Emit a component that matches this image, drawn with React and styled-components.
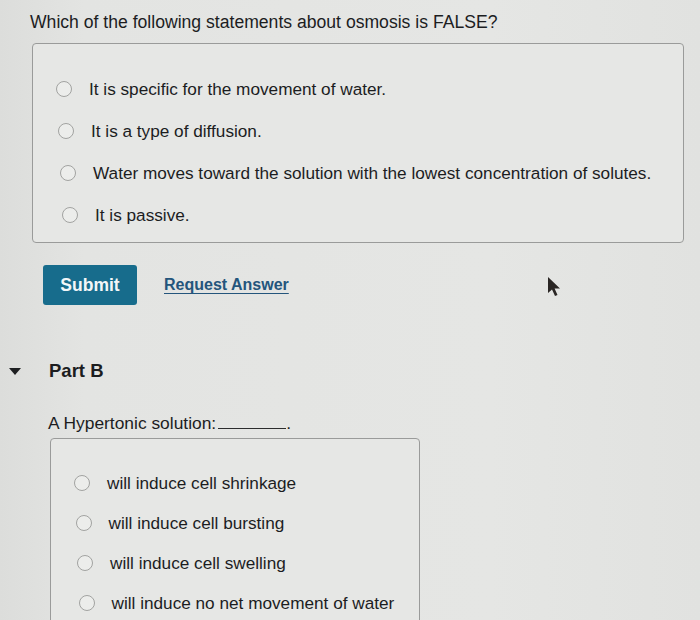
import React from 'react'
import styled, {createGlobalStyle} from 'styled-components'

const GlobalStyle = createGlobalStyle`
  body {
    margin: 0;
    background: #e2e3e1;
    font-family: "Liberation Sans", Arial, sans-serif;
    color: #1c1d1f;
  }
`

const partA = [
  'It is specific for the movement of water.',
  'It is a type of diffusion.',
  'Water moves toward the solution with the lowest concentration of solutes.',
  'It is passive.'
]

const partB = [
  'will induce cell shrinkage',
  'will induce cell bursting',
  'will induce cell swelling',
  'will induce no net movement of water'
]

function Choices({items, row, drift, ...rest}) {
  return (
    <ChoiceBox {...rest}>
      {items.map((text, i) => (
        <Option key={text} $row={row} $shift={i * drift}>
          <Radio />
          <span>{text}</span>
        </Option>
      ))}
    </ChoiceBox>
  )
}

const Pointer = () => (
  <Cursor width="16" height="22" viewBox="0 0 16 22">
    <path d="M2 1 L2 17 L6 13.5 L9 20 L11.5 19 L8.6 12.6 L14 12.4 Z" fill="#2a2624" />
  </Cursor>
)

export default function App() {
  return (
    <Page>
      <GlobalStyle />
      <Title>Which of the following statements about osmosis is FALSE?</Title>
      <Choices items={partA} row={42} drift={2} $left={32} $width={652} $height={200} $top={10} />

      <Actions>
        <Button type="button">Submit</Button>
        <LinkText href="#">Request Answer</LinkText>
      </Actions>

      <PartHeader>
        <Caret />
        <PartTitle>Part B</PartTitle>
      </PartHeader>

      <Prompt>
        A Hypertonic solution:<Blank />.
      </Prompt>
      <Choices items={partB} row={40} drift={1.5} $left={50} $width={370} $height={220} $top={5} />

      <Pointer />
    </Page>
  )
}

const Page = styled.div`
  position: relative;
  width: 700px;
  height: 620px;
  overflow: hidden;
  background: linear-gradient(90deg, #dcdddb 0%, #e3e4e2 12%, #e5e6e4 70%, #e1e2e0 100%);
`

const Title = styled.h1`
  margin: 0;
  padding: 12px 0 0 30px;
  font-size: 17.6px;
  line-height: 21px;
  font-weight: normal;
`

const ChoiceBox = styled.div`
  box-sizing: border-box;
  margin: ${p => p.$top}px 0 0 ${p => p.$left}px;
  width: ${p => p.$width}px;
  height: ${p => p.$height}px;
  padding: 24px 0 0 23px;
  border: 1px solid #9a9b9a;
  border-radius: 4px;
  background: #e6e7e5;
`

const Option = styled.div`
  display: flex;
  align-items: center;
  gap: 17px;
  height: ${p => p.$row}px;
  padding-left: ${p => p.$shift}px;
  font-size: 17.2px;
`

const Radio = styled.span`
  flex: none;
  box-sizing: border-box;
  width: 16px;
  height: 16px;
  border: 1.5px solid #a2a3a1;
  border-radius: 50%;
  background: #ecedeb;
`

const Actions = styled.div`
  display: flex;
  align-items: center;
  gap: 27px;
  margin: 22px 0 0 43px;
`

const Button = styled.button`
  width: 94px;
  height: 40px;
  border: none;
  border-radius: 3px;
  background: #176c8c;
  color: #f2f6f8;
  font-family: inherit;
  font-size: 17.5px;
  font-weight: bold;
`

const LinkText = styled.a`
  color: #24557c;
  font-size: 16px;
  font-weight: bold;
  text-decoration: underline;
  text-underline-offset: 3px;
`

const PartHeader = styled.div`
  display: flex;
  align-items: center;
  height: 24px;
  margin-top: 54px;
  padding-left: 9px;
`

const Caret = styled.span`
  width: 0;
  height: 0;
  border-left: 6px solid transparent;
  border-right: 6px solid transparent;
  border-top: 7px solid #1e1f21;
  margin-right: 28px;
`

const PartTitle = styled.h2`
  margin: 0;
  font-size: 18.5px;
  font-weight: bold;
`

const Prompt = styled.p`
  margin: 30px 0 0 48px;
  font-size: 17.4px;
  line-height: 20px;
`

const Blank = styled.span`
  display: inline-block;
  width: 68px;
  margin-left: 2px;
  border-bottom: 1px solid #2b2c2d;
`

const Cursor = styled.svg`
  position: absolute;
  left: 546px;
  top: 276px;
`
